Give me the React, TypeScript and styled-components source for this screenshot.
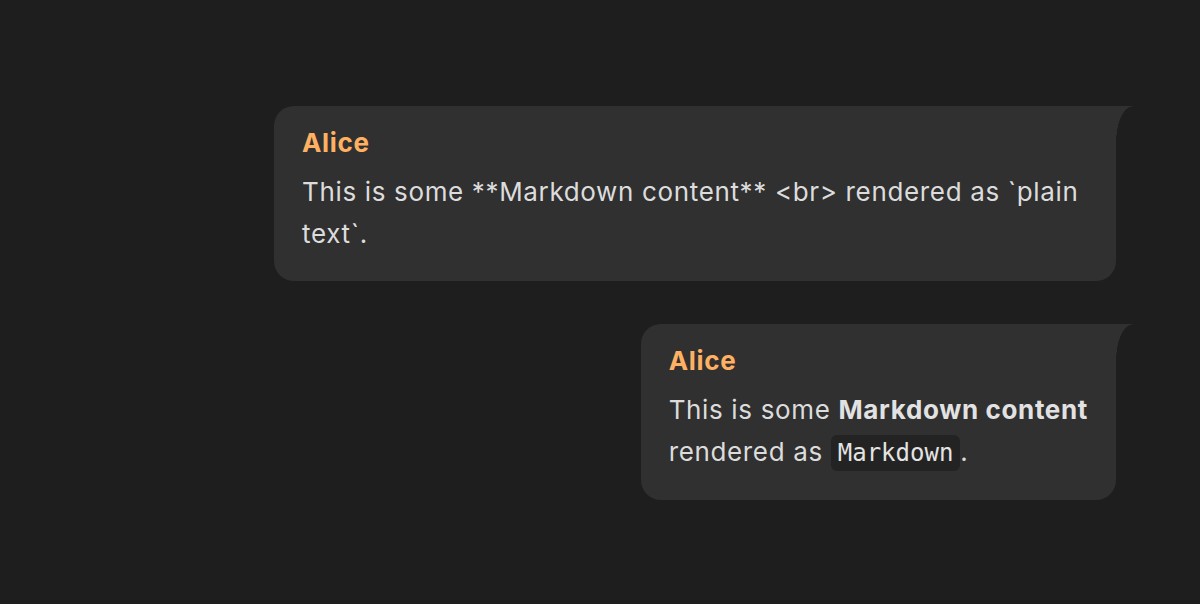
import styled, { createGlobalStyle } from "styled-components";

const GlobalStyle = createGlobalStyle`
  html, body {
    margin: 0;
    padding: 0;
    background: #1e1e1e;
  }
  body {
    font-family: Inter, "Noto Sans", "Liberation Sans", sans-serif;
  }
`;

interface Message {
  author: string;
  raw: boolean;
}

const messages: Message[] = [
  { author: "Alice", raw: true },
  { author: "Alice", raw: false },
];

function App() {
  return (
    <>
      <GlobalStyle />
      <Thread>
        {messages.map((msg, i) => (
          <Bubble key={i}>
            <Author>{msg.author}</Author>
            {msg.raw ? (
              <Body>
                This is some **Markdown content** &lt;br&gt; rendered as `plain
                text`.
              </Body>
            ) : (
              <Body>
                This is some <strong>Markdown content</strong>
                <br />
                rendered as <Code>Markdown</Code>.
              </Body>
            )}
          </Bubble>
        ))}
      </Thread>
    </>
  );
}

const Thread = styled.div`
  width: 1200px;
  height: 604px;
  box-sizing: border-box;
  padding: 106px 84px 0 0;
  display: flex;
  flex-direction: column;
  align-items: flex-end;
  gap: 43px;
`;

const Bubble = styled.div`
  position: relative;
  max-width: 842px;
  box-sizing: border-box;
  padding: 20px 28px 26px;
  background: #303030;
  border-radius: 20px;
  border-top-right-radius: 0;

  &::after {
    content: "";
    position: absolute;
    top: 0;
    right: -17px;
    width: 17px;
    height: 36px;
    background: radial-gradient(
      ellipse 17px 36px at 100% 100%,
      transparent 98%,
      #303030 100%
    );
  }
`;

const Author = styled.div`
  font-size: 26px;
  line-height: 34px;
  font-weight: 700;
  letter-spacing: 0.7px;
  color: #ffb163;
  margin-bottom: 11px;
`;

const Body = styled.div`
  font-size: 26px;
  line-height: 42px;
  letter-spacing: 0.65px;
  color: #dcdcdc;

  strong {
    font-weight: 700;
    color: #e2e2e2;
  }
`;

const Code = styled.code`
  font-family: "DejaVu Sans Mono", "Liberation Mono", monospace;
  font-size: 24px;
  letter-spacing: 0;
  color: #e4e4e4;
  background: #232323;
  border-radius: 6px;
  padding: 4px 7px;
`;

export default App;
